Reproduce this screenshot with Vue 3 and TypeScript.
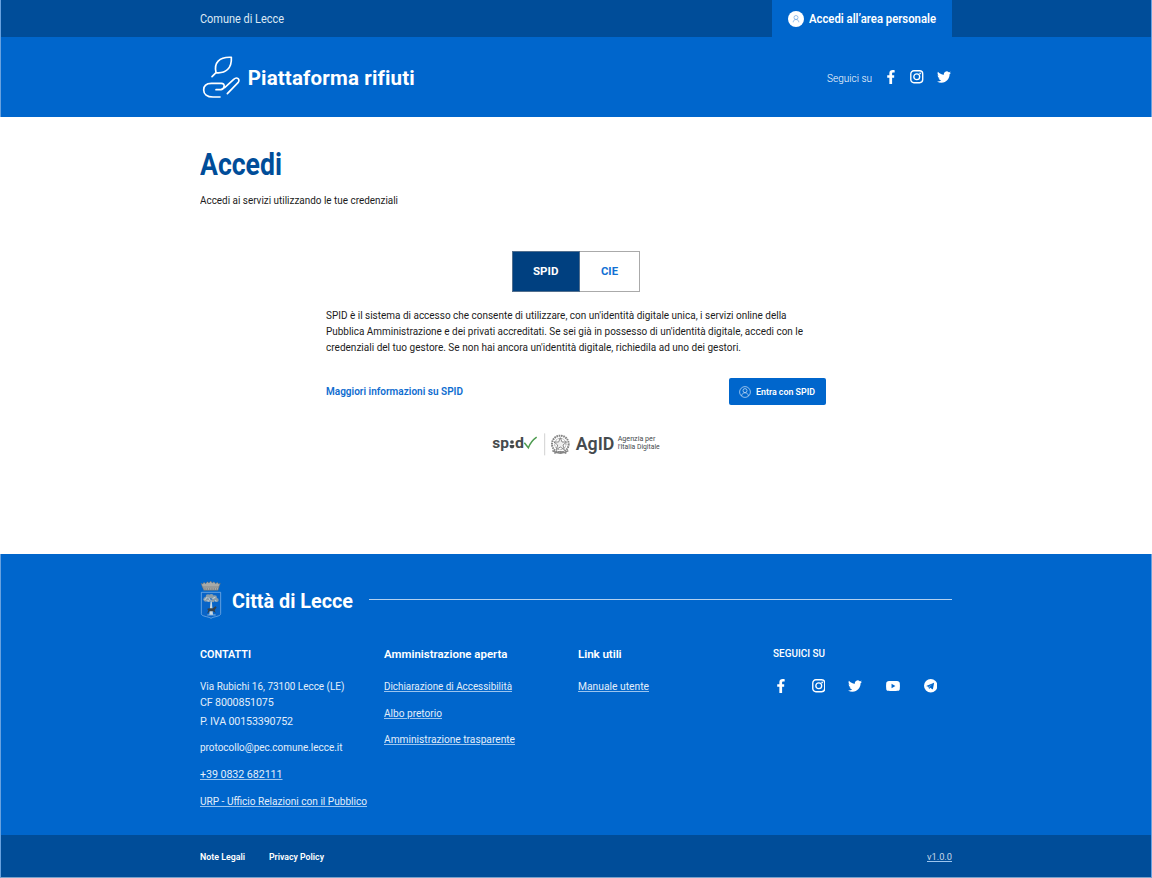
<script setup lang="ts">
import type { Directive } from 'vue'

interface FooterLink {
  label: string
  width: number
}

const vFit: Directive<HTMLElement, number, 'condense'> = {
  mounted(el, { value, modifiers }) {
    const natural = el.getBoundingClientRect().width
    const count = (el.textContent ?? '').trim().length
    if (count === 0) return
    if (modifiers.condense) {
      el.style.width = `${value}px`
      el.style.transform = `scaleX(${value / natural})`
    } else {
      el.style.letterSpacing = `${(value - natural) / count}px`
    }
  },
}

const intro: FooterLink[] = [
  { label: "SPID è il sistema di accesso che consente di utilizzare, con un'identità digitale unica, i servizi online della", width: 460.5 },
  { label: "Pubblica Amministrazione e dei privati accreditati. Se sei già in possesso di un'identità digitale, accedi con le", width: 477 },
  { label: "credenziali del tuo gestore. Se non hai ancora un'identità digitale, richiedila ad uno dei gestori.", width: 415 },
]

const adminLinks: FooterLink[] = [
  { label: 'Dichiarazione di Accessibilità', width: 128 },
  { label: 'Albo pretorio', width: 58 },
  { label: 'Amministrazione trasparente', width: 131 },
]

const paths = {
  facebook: 'M14 8.9h-3.6V6.100c0-1.100.6-1.800 2.200-1.800H14.800V.3S13.100 0 11.300 0C7.900 0 5.700 2 5.700 5.600v3.300H2v4.200h3.700V24h4.700V13.100h3.500z',
  twitter: 'M23.953 4.57a10 10 0 01-2.825.775 4.958 4.958 0 002.163-2.723c-.951.555-2.005.959-3.127 1.184a4.92 4.92 0 00-8.384 4.482C7.69 8.095 4.067 6.13 1.64 3.162a4.822 4.822 0 00-.666 2.475c0 1.71.87 3.213 2.188 4.096a4.904 4.904 0 01-2.228-.616v.06a4.923 4.923 0 003.946 4.827 4.996 4.996 0 01-2.212.085 4.936 4.936 0 004.604 3.417 9.867 9.867 0 01-6.102 2.105c-.39 0-.779-.023-1.17-.067a13.995 13.995 0 007.557 2.209c9.053 0 13.998-7.496 13.998-13.985 0-.21 0-.42-.015-.63A9.935 9.935 0 0024 4.59z',
  youtube: 'M3.500 3.700C6 3.200 18 3.200 20.500 3.700 22.500 4.100 23.400 5.300 23.600 7c.4 3.300.4 6.700 0 10-.2 1.700-1.100 2.900-3.100 3.300-2.500.5-14.500.5-17 0C1.500 19.900.600 18.700.400 17 0 13.700 0 10.300.400 7c.2-1.700 1.100-2.900 3.100-3.300zM9.500 8.200v7.600l6.600-3.800z',
  telegram: 'M12 0a12 12 0 100 24 12 12 0 000-24zm5.900 7.300l-2 10.500c-.1.600-.6.800-1.200.5l-3.400-2.600-1.700 1.700c-.3.300-.8.300-.9-.3l-.8-3.300-3.100-1c-.7-.2-.7-.7.1-1l12-4.900c.7-.3 1.200 0 1 .4zM9 13.600l.4 2.600.5-2.500 5.900-5.400z',
}
</script>

<template>
  <div class="page">
    <div class="topbar">
      <div class="wrap">
        <span v-fit.condense="84" class="entity">Comune di Lecce</span>
        <div class="access">
          <svg class="access-icon" viewBox="0 0 16 16">
            <circle cx="8" cy="8" r="8" fill="#fff" />
            <g fill="none" stroke="#6ba5e2" stroke-width=".7"><circle cx="8" cy="6.500" r="2" /><path d="M5.200 11.300c0-1.700 1.100-2.800 2.800-2.800s2.800 1.100 2.800 2.800" /></g>
          </svg>
          <b v-fit.condense="127">Accedi all’area personale</b>
        </div>
      </div>
    </div>

    <header class="header">
      <div class="wrap">
        <svg class="leaf" viewBox="36 165 116 132" fill="none" stroke="#fff" stroke-width="5" stroke-linecap="round" stroke-linejoin="round">
          <path d="M66 230l12-12C71 189 87 170 124 172C126 205 107 221 78 218" />
          <path d="M90 291H69C51 291 41 282 41 270C41 257 50 250 64 250H94C106 250 105 266 93 269H78" />
          <path d="M104 263L131 238C141 229 152 238 144 248L112 281" />
        </svg>
        <span v-fit="167" class="brand">Piattaforma rifiuti</span>
        <div class="follow">
          <span v-fit.condense="45" class="follow-label">Seguici su</span>
          <svg class="icon fb" viewBox="0 0 17 24"><path :d="paths.facebook" /></svg>
          <svg class="icon ig" viewBox="0 0 24 24"><rect x="1.400" y="1.400" width="21.200" height="21.200" rx="5.500" /><circle cx="12" cy="12" r="5.200" /><circle class="dot" cx="18" cy="6" r="1.500" /></svg>
          <svg class="icon tw" viewBox="0 0 24 24"><path :d="paths.twitter" /></svg>
        </div>
      </div>
    </header>

    <main class="main">
      <h1><span v-fit.condense="82">Accedi</span></h1>
      <p class="lead"><span v-fit.condense="198">Accedi ai servizi utilizzando le tue credenziali</span></p>

      <div class="tabs">
        <div class="tab active"><span v-fit.condense="25.500">SPID</span></div>
        <div class="tab"><span v-fit.condense="17">CIE</span></div>
      </div>

      <section class="panel">
        <div class="copy">
          <div v-for="line in intro" :key="line.label" class="copy-line"><span v-fit.condense="line.width">{{ line.label }}</span></div>
        </div>
        <div class="actions">
          <a v-fit.condense="137" class="more">Maggiori informazioni su SPID</a>
          <button type="button" class="enter">
            <svg viewBox="0 0 12 12" fill="none" stroke="#c5dcf4" stroke-width=".75"><circle cx="6" cy="6" r="5.400" /><circle cx="6" cy="4.600" r="2" /><path d="M2.600 10c.2-2 1.400-3.200 3.400-3.200S9.200 8 9.400 10" /></svg>
            <span v-fit.condense="59">Entra con SPID</span>
          </button>
        </div>
      </section>

      <svg class="logos" viewBox="15 15 516 80">
        <g class="logo-text">
          <text x="22" y="70" font-size="43" font-weight="700" textLength="50" lengthAdjust="spacingAndGlyphs">sp</text>
          <circle cx="81" cy="51" r="5.500" />
          <path d="M74 60h14v3c0 5-3 7-7 7s-7-2-7-7z" />
          <text x="90" y="70" font-size="43" font-weight="700" textLength="27" lengthAdjust="spacingAndGlyphs">d</text>
          <text x="272" y="75" font-size="57" font-weight="600" textLength="116" lengthAdjust="spacingAndGlyphs">AgID</text>
          <text x="398" y="49" font-size="22" textLength="113" lengthAdjust="spacingAndGlyphs">Agenzia per</text>
          <text x="398" y="73" font-size="22" textLength="126" lengthAdjust="spacingAndGlyphs">l'Italia Digitale</text>
        </g>
        <path d="M118 53l12 15C135 55 142 45 155 36" fill="none" stroke="#4e9c51" stroke-width="4.500" />
        <path d="M179 25v66" stroke="#bbb" stroke-width="2" />
        <g fill="none" stroke="#858585">
          <circle cx="226" cy="57" r="25" stroke-width="6" stroke-dasharray="5 2" />
          <circle cx="226" cy="57" r="17" stroke-width="3" stroke-dasharray="3 2" />
          <path d="M202 77q24 16 48 0M208 85q18-10 36 0" stroke-width="4" />
        </g>
        <path d="M226 38l5 13h14l-11 9 4 14-12-8-12 8 4-14-11-9h14z" fill="#eee" stroke="#777" stroke-width="2.500" />
      </svg>
    </main>

    <footer class="footer">
      <div class="city">
        <svg class="crest" viewBox="29 31 66 118">
          <g fill="#a8aaa8" stroke="#656b70" stroke-width="1.500">
            <path d="M32 41l5 2 4-5 5 4 5-6 5 4 5-6 5 6 5-4 5 6 5-4 4 5 5-2-5 13H37z" />
            <path d="M37 52h49l-3 10H40z" />
          </g>
          <path d="M42 58h38" stroke="#4d5358" stroke-width="2" stroke-dasharray="4 3" />
          <path d="M33 68h58v64c0 9-20 8-29 14-9-6-29-5-29-14z" fill="#0864c8" stroke="#8fbdec" stroke-width="2" />
          <path d="M61 90l-4 45h11l-4-45" fill="#c9d8e2" />
          <g fill="#8c9da8"><circle cx="46" cy="89" r="7" /><circle cx="53" cy="81" r="7" /><circle cx="63" cy="80" r="7" /><circle cx="73" cy="84" r="7" /><circle cx="79" cy="91" r="6" /><circle cx="68" cy="93" r="5" /><circle cx="56" cy="92" r="5" /></g>
          <path d="M43 91l8-9M55 84l5 8M66 87l9-4M73 93l5 1M49 94l8 0" stroke="#dde5e9" stroke-width="2.500" />
          <path d="M50 118l6-2h12l7-6 4 3-6 9 3 8-7-5H57l-4 6-2-1 3-8z" fill="#35414c" />
          <path d="M51 136h25" stroke="#c9d8e2" stroke-width="2" />
        </svg>
        <span v-fit.condense="121" class="city-name">Città di Lecce</span>
        <div class="rule"></div>
      </div>

      <div class="columns">
        <div class="col">
          <h2><span v-fit.condense="51">CONTATTI</span></h2>
          <p><span v-fit.condense="144.500">Via Rubichi 16, 73100 Lecce (LE)</span></p>
          <p><span v-fit="73.500">CF 8000851075</span></p>
          <p class="vat"><span v-fit="93">P. IVA 00153390752</span></p>
          <p class="gap"><span v-fit.condense="142.500">protocollo@pec.comune.lecce.it</span></p>
          <p class="gap"><a v-fit="82.500">+39 0832 682111</a></p>
          <p class="gap"><a v-fit.condense="167">URP - Ufficio Relazioni con il Pubblico</a></p>
        </div>
        <div class="col">
          <h2><span v-fit.condense="123.500">Amministrazione aperta</span></h2>
          <p v-for="link in adminLinks" :key="link.label" class="spaced"><a v-fit.condense="link.width">{{ link.label }}</a></p>
        </div>
        <div class="col">
          <h2><span v-fit="43.500">Link utili</span></h2>
          <p><a v-fit.condense="71">Manuale utente</a></p>
        </div>
        <div class="col">
          <h2 class="small"><span v-fit.condense="52">SEGUICI SU</span></h2>
          <div class="socials">
            <svg class="icon fb" viewBox="0 0 17 24"><path :d="paths.facebook" /></svg>
            <svg class="icon ig" viewBox="0 0 24 24"><rect x="1.400" y="1.400" width="21.200" height="21.200" rx="5.500" /><circle cx="12" cy="12" r="5.200" /><circle class="dot" cx="18" cy="6" r="1.500" /></svg>
            <svg class="icon tw" viewBox="0 0 24 24"><path :d="paths.twitter" /></svg>
            <svg class="icon tw" viewBox="0 0 24 24"><path fill-rule="evenodd" :d="paths.youtube" /></svg>
            <svg class="icon ig tg" viewBox="0 0 24 24"><path fill-rule="evenodd" :d="paths.telegram" /></svg>
          </div>
        </div>
      </div>
    </footer>

    <div class="legal">
      <div class="wrap">
        <b v-fit.condense="45">Note Legali</b>
        <b v-fit.condense="55" class="privacy">Privacy Policy</b>
        <a v-fit.condense="25" class="version">v1.0.0</a>
      </div>
    </div>
  </div>
</template>

<style>
body {
  margin: 0;
  background: #fff;
}
</style>

<style scoped>
.page {
  box-sizing: border-box;
  width: 1152px;
  height: 878px;
  overflow: hidden;
  font-family: Roboto, "Open Sans", sans-serif;
  font-size: 10.7px;
  color: #1c1c1c;
  white-space: nowrap;
  display: flex;
  flex-direction: column;
}
span, b, a { display: inline-block; transform-origin: left center; }
.topbar, .header, .footer, .legal {
  box-sizing: border-box;
  border-left: 1px solid #68a1df;
  border-right: 1px solid #68a1df;
  color: #fff;
}
.wrap {
  width: 752px;
  height: 100%;
  margin: 0 auto;
  display: flex;
  align-items: center;
}
.topbar { height: 37px; background: #004d99; flex: none; }
.entity { font-size: 12px; color: #dce8f4; padding-top: 1px; }
.access {
  box-sizing: border-box;
  width: 180px;
  height: 100%;
  margin-left: auto;
  padding-left: 16px;
  background: #06c;
  display: flex;
  align-items: center;
  font-size: 12px;
}
.access b { font-weight: 600; padding-top: 1px; }
.access-icon { width: 16px; height: 16px; margin-right: 5px; }
.header { height: 80px; background: #06c; flex: none; }
.leaf { width: 38.700px; height: 44px; margin: 0 7px 0 2px; }
.brand { font-size: 20.500px; font-weight: 700; padding-top: 2px; }
.follow { margin-left: auto; display: flex; align-items: center; }
.follow-label { font-size: 11px; font-weight: 300; margin-right: 13.500px; padding-top: 2px; }
.icon { display: block; fill: #fff; }
.fb { width: 10px; height: 14px; }
.ig { width: 13.500px; height: 13.500px; }
.tw { width: 14px; height: 14px; }
.ig rect, .ig circle:not(.dot) { fill: none; stroke: #fff; stroke-width: 2.400; }
.follow .ig { margin: 0 13px 0 14.500px; }
.follow .tw { margin-right: 1.500px; }
.main { height: 437px; flex: none; display: flex; flex-direction: column; align-items: center; }
h1 {
  width: 752px;
  margin: 29px 0 0;
  font-size: 31px;
  line-height: 38px;
  font-weight: 700;
  color: #004d99;
}
.lead { width: 752px; margin: 8px 0 0; line-height: 18px; }
.tabs { display: flex; width: 128px; height: 41px; margin-top: 40.500px; }
.tab {
  box-sizing: border-box;
  width: 60px;
  border: 1px solid #aaa;
  border-left: 0;
  display: flex;
  align-items: center;
  justify-content: center;
  font-size: 11.500px;
  font-weight: 700;
  color: #1271d4;
}
.active { width: 68px; background: #004080; color: #fff; border: 1px solid #526f8e; }
.panel { width: 500px; margin-top: 16.500px; }
.copy-line { height: 16px; line-height: 16px; }
.actions { display: flex; align-items: center; justify-content: space-between; margin-top: 22px; }
.more { color: #0f6dd0; font-weight: 600; }
.enter {
  box-sizing: border-box;
  width: 97px;
  height: 27px;
  padding: 0 0 0 10px;
  border: 0;
  border-radius: 2px;
  background: #06c;
  color: #fff;
  display: flex;
  align-items: center;
  font: 600 9px Roboto, sans-serif;
}
.enter svg { width: 12px; height: 12px; margin-right: 5px; }
.logos { width: 172px; height: 26.700px; margin: 25px 0 0; }
.logo-text { fill: #454a4d; font-family: Roboto, sans-serif; }
.footer { height: 281px; flex: none; background: #06c; padding: 26px 199px 0; }
.city { display: flex; align-items: center; height: 40px; }
.crest { width: 22px; height: 39.300px; }
.city-name { font-size: 21px; font-weight: 700; margin-left: 10px; padding-top: 1px; }
.rule { flex: 1; height: 1px; background: #b3d1f0; margin: 0 0 1px 16px; }
.columns { display: grid; grid-template-columns: 183.500px 194.500px 195px 179px; margin-top: 26px; }
h2 { margin: 0 0 17px; font-size: 11.700px; line-height: 16px; font-weight: 600; }
.small { font-size: 10.500px; font-weight: 500; }
.col p { margin: 0; height: 16px; line-height: 16px; color: #e3eefa; }
.col p.vat { margin-top: 2.500px; }
.col p.gap { margin-top: 10.700px; }
.col p.spaced { margin-bottom: 10.700px; }
.col a, .version { text-decoration: underline; text-decoration-thickness: 1px; text-underline-offset: 1px; text-decoration-color: #9cc5ef; }
.socials { display: flex; align-items: center; height: 14px; padding-left: 3px; margin-top: 1px; }
.socials .ig { margin: 0 23px 0 25.500px; }
.socials .tw + .tw { margin-left: 24px; }
.socials .tg { margin: 0 0 0 23.500px; }
.legal { height: 43px; flex: none; background: #004d99; border-bottom: 1px solid #7ba3cb; font-size: 9px; }
.legal b { font-weight: 600; padding-top: 1px; }
.privacy { margin-left: 24px; }
.version { margin-left: auto; font-size: 9.500px; color: #c7d8e8; }
</style>
